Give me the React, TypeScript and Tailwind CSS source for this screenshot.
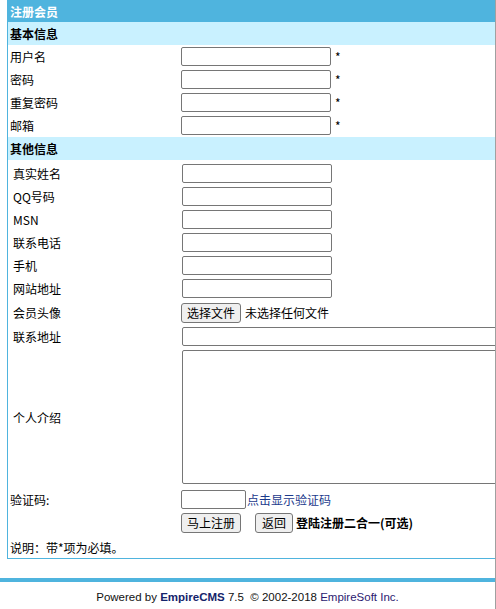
const cjk = { fontFamily: '"Noto Sans CJK SC", "Liberation Sans", sans-serif' };

function Input({ w = "w-[150px]", extra = "" }: { w?: string; extra?: string }) {
  return (
    <input
      type="text"
      className={`${w} h-[19px] border border-[#767676] rounded-[2px] bg-white px-1 outline-none ${extra}`}
    />
  );
}

function Btn({ children, w }: { children: React.ReactNode; w: string }) {
  return (
    <button
      className={`${w} h-[20px] border border-[#767676] rounded-[3px] bg-[#efefef] text-[12px] text-black leading-none`}
      style={cjk}
    >
      {children}
    </button>
  );
}

function Row({
  label,
  h = "h-[23px]",
  pad = "pl-[2px]",
  children,
}: {
  label: string;
  h?: string;
  pad?: string;
  children?: React.ReactNode;
}) {
  return (
    <div className={`flex items-center ${h}`}>
      <div className={`w-[173px] shrink-0 ${pad}`}>{label}</div>
      <div className="flex items-center">{children}</div>
    </div>
  );
}

export default function App() {
  return (
    <div
      className="w-[496px] h-[609px] overflow-hidden border-r border-[#a0a0a0] bg-white text-[12px] text-black"
      style={cjk}
    >
      <div className="ml-[7px] w-[540px] border border-[#4fb4de]">
        {/* 标题 */}
        <div className="h-[21px] bg-[#4fb4de] pl-[2px] flex items-center font-bold text-white">注册会员</div>
        <div className="h-[23px] bg-[#c9f1ff] pl-[2px] flex items-center font-bold">基本信息</div>

        <Row label="用户名">
          <Input />
          <span className="ml-[4px]">*</span>
        </Row>
        <Row label="密码">
          <Input />
          <span className="ml-[4px]">*</span>
        </Row>
        <Row label="重复密码">
          <Input />
          <span className="ml-[4px]">*</span>
        </Row>
        <Row label="邮箱">
          <Input />
          <span className="ml-[4px]">*</span>
        </Row>

        <div className="h-[23px] bg-[#c9f1ff] pl-[2px] flex items-center font-bold">其他信息</div>

        {/* 其他信息 */}
        <div className="pt-[2px]">
          {["真实姓名", "QQ号码", "MSN", "联系电话", "手机", "网站地址"].map((l) => (
            <Row key={l} label={l} pad="pl-[5px]">
              <Input extra="ml-[1px]" />
            </Row>
          ))}
          <Row label="会员头像" h="h-[25px]" pad="pl-[5px]">
            <Btn w="w-[60px]">选择文件</Btn>
            <span className="ml-[4px]">未选择任何文件</span>
          </Row>
          <Row label="联系地址" pad="pl-[5px]">
            <Input w="w-[340px]" extra="ml-[1px]" />
          </Row>
          <div className="flex h-[140px]">
            <div className="w-[173px] shrink-0 pl-[5px] flex items-center">个人介绍</div>
            <textarea className="ml-[1px] mt-[2px] w-[340px] h-[134px] border border-[#767676] rounded-[2px] resize-none outline-none" />
          </div>
        </div>

        <Row label="验证码:">
          <Input w="w-[65px]" />
          <span className="ml-[1px] text-[#1b3a8c]">点击显示验证码</span>
        </Row>
        <Row label="" h="h-[24px]">
          <Btn w="w-[60px]">马上注册</Btn>
          <span className="w-[14px]" />
          <Btn w="w-[38px]">返回</Btn>
          <span className="ml-[3px] font-bold">登陆注册二合一(可选)</span>
        </Row>
        <div className="h-[23px] pl-[2px] flex items-center pt-[2px]">说明：带*项为必填。</div>
      </div>

      {/* 页脚 */}
      <div className="mt-[19px] h-[4px] bg-[#4fb4de]" />
      <div
        className="pt-[8px] h-[24px] flex items-center justify-center text-[11.5px] text-[#111]"
        style={{ fontFamily: '"Liberation Sans", Arial, sans-serif' }}
      >
        Powered by&nbsp;<b className="text-[#14236b]">EmpireCMS</b>&nbsp;7.5&nbsp;&nbsp;©&nbsp;2002-2018&nbsp;
        <span className="text-[#2c1a70]">EmpireSoft Inc.</span>
      </div>
    </div>
  );
}
